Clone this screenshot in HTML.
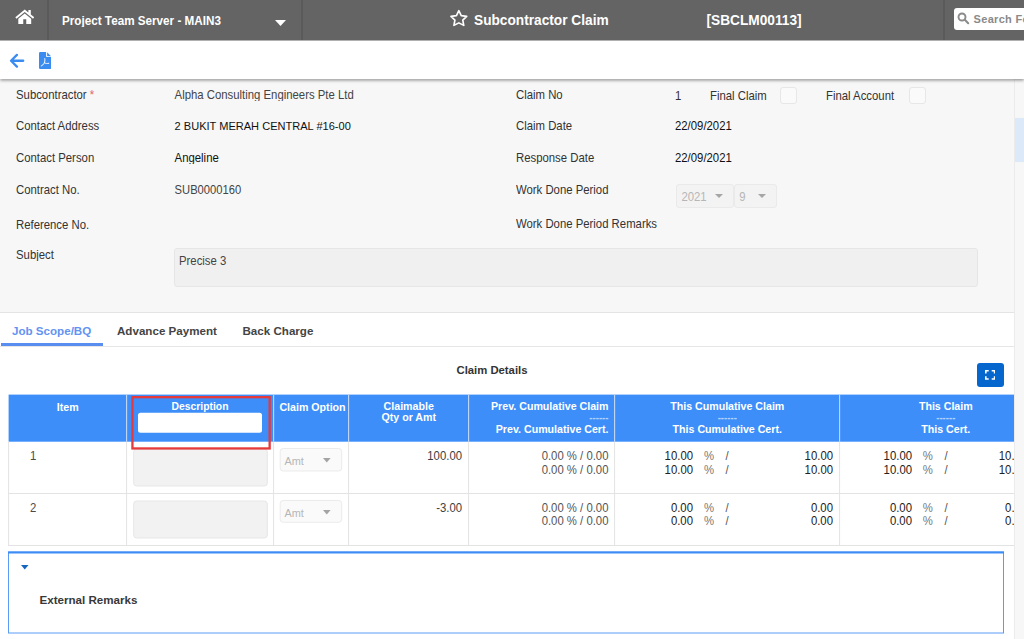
<!DOCTYPE html>
<html><head><meta charset="utf-8">
<style>
*{box-sizing:border-box;margin:0;padding:0}
html,body{width:1024px;height:639px;overflow:hidden;background:#fff;font-family:"Liberation Sans",sans-serif;font-size:12px;color:#333}
.abs{position:absolute}
#hdr{position:absolute;left:0;top:0;width:1024px;height:40px;background:#646464;z-index:4;border-bottom:1px solid #b0b0b0;box-sizing:content-box}
.vdiv{position:absolute;top:0;width:2px;height:40px;background:#5a5a5a}
.hb{position:absolute;color:#fff;font-weight:bold;white-space:nowrap}
#tool{position:absolute;left:0;top:41px;width:1024px;height:38px;background:#fff;box-shadow:0 1.5px 3px rgba(0,0,0,.4);z-index:3}
#form{position:absolute;left:0;top:80px;width:1014px;height:233px;background:#f7f7f7;border-bottom:1px solid #e4e4e4}
.lbl{margin-top:.2px;position:absolute;white-space:nowrap;font-size:11.35px;color:#333;line-height:13.084px;transform:scaleY(1.07);transform-origin:0 0}
.val{margin-top:.2px;position:absolute;white-space:nowrap;font-size:11.35px;color:#222;line-height:13.084px;transform:scaleY(1.07);transform-origin:0 0}
#side{position:absolute;left:1014px;top:79px;width:10px;height:560px;background:#f7f7f7;border-left:1px solid #ebebeb}
#side i{position:absolute;left:0;top:39.2px;width:10px;height:43.4px;background:#dce9f8}
.tab{position:absolute;top:323.500px;font-size:11.600px;line-height:14px;font-weight:bold;color:#444;white-space:nowrap}
.sel{background:#f3f3f3;border:1px solid #eaeaea;border-radius:3px}
.sel span{position:absolute;top:4.500px;font-size:11.35px;line-height:13.084px;transform:scaleY(1.07);transform-origin:0 0;color:#b6b6b6}
.sel b{position:absolute;top:9px;width:0;height:0;border-left:4px solid transparent;border-right:4px solid transparent;border-top:4px solid #a6a6a6}
#tabs{position:absolute;left:0;top:0}
#grid{position:absolute;left:0;top:0;width:1014px;height:639px;overflow:hidden}
.th{position:absolute;color:#fff;font-weight:bold;font-size:10.650px;line-height:10.981px;transform:scaleY(1.07);transform-origin:0 0;text-align:center;white-space:nowrap}
.ds{font-size:9.6px;opacity:.6;line-height:0;position:relative;top:0px}
.td{position:absolute;font-size:11.350px;line-height:13.084px;transform:scaleY(1.07);transform-origin:0 0;white-space:nowrap}
.td.r{text-align:right}
#panel{position:absolute;left:8px;top:551.500px;width:996px;height:82px;border:1px solid #5a9cf5;border-top:2px solid #3d8ef9;background:#fff}
table{border-collapse:collapse}
</style></head><body>
<div id="hdr">
 <div class="vdiv" style="left:46.8px"></div>
 <div class="vdiv" style="left:301px"></div>
 <div class="vdiv" style="left:943px"></div>
 <svg class="abs" style="left:14.6px;top:9.200px" width="19.500" height="15.100" viewBox="0 0 19.500 14.800" preserveAspectRatio="none"><path d="M9.750.5.300 8.100l1.200 1.400L9.750 2.900l8.250 6.600 1.200-1.400-3.400-2.750V1h-2.400v2.400z" fill="#fff"/><path d="M9.750 4.300 3.300 9.500v5.100h4.950v-4.500h3v4.500h4.950V9.500z" fill="#fff"/></svg>
 <div class="hb" style="left:62px;top:13px;font-size:11.7px;line-height:13.084px;transform:scaleY(1.07);transform-origin:0 0">Project Team Server - MAIN3</div>
 <svg class="abs" style="left:275px;top:20px" width="11" height="6" viewBox="0 0 11 6"><path d="M0 0h11L5.5 6z" fill="#fff"/></svg>
 <svg class="abs" style="left:449.100px;top:8.700px" width="19.700" height="18.100" viewBox="0 0 18 17" preserveAspectRatio="none"><path d="M9 1.6l2.2 4.6 5 .7-3.6 3.5.9 5L9 13l-4.5 2.4.9-5L1.8 6.9l5-.7z" fill="none" stroke="#fff" stroke-width="1.5" stroke-linejoin="round"/></svg>
 <div class="hb" style="left:474px;top:12.5px;font-size:13.7px;line-height:14.953px;transform:scaleY(1.07);transform-origin:0 0">Subcontractor Claim</div>
 <div class="hb" style="left:706.5px;top:12.5px;font-size:13.7px;line-height:14.953px;transform:scaleY(1.07);transform-origin:0 0">[SBCLM00113]</div>
 <div class="abs" style="left:954px;top:8px;width:80px;height:22px;background:#fff;border-radius:3px"></div>
 <svg class="abs" style="left:956.8px;top:12px" width="13" height="13" viewBox="0 0 13 13"><circle cx="5" cy="5" r="3.5" fill="none" stroke="#8a8a8a" stroke-width="1.900"/><path d="M7.800 7.800l3.400 3.400" stroke="#8a8a8a" stroke-width="2" stroke-linecap="round"/></svg>
 <div class="abs" style="left:973.6px;top:12px;font-size:11px;line-height:13.084px;transform:scaleY(1.07);transform-origin:0 0;font-weight:bold;color:#8a8a8a;white-space:nowrap;letter-spacing:.3px">Search For</div>
</div>
<div id="tool">
 <svg class="abs" style="left:9px;top:11.9px" width="15.500" height="15.500" viewBox="0 0 15.500 15.500"><path d="M14.200 7.750H2.400M7.900 1.900 2.050 7.750 7.900 13.600" fill="none" stroke="#3b8cf0" stroke-width="2.300" stroke-linecap="round" stroke-linejoin="round"/></svg>
 <svg class="abs" style="left:39px;top:10.700px" width="12.300" height="17" viewBox="0 0 12.300 17"><path d="M1.300 0H7.100V3.900Q7.100 5.100 8.300 5.100H12.300V15.700Q12.300 17 11 17H1.300Q0 17 0 15.700V1.300Q0 0 1.300 0Z" fill="#3b8cf0"/><path d="M8.100.3 12 4.200H8.800Q8.100 4.200 8.100 3.500Z" fill="#3b8cf0"/><path d="M5.800 6.600C6.100 8.500 5.700 10 5.200 11.100 4.500 12.500 3.400 13.600 2.300 14M5.300 10.700C6.600 11.600 8.200 11.700 9.800 11.300" fill="none" stroke="#fff" stroke-width=".95" stroke-linecap="round"/></svg>
</div>
<div id="form">
 <div class="lbl" style="left:16px;top:8px">Subcontractor <span style="color:#e8605c">*</span></div>
 <div class="lbl" style="left:16px;top:39px">Contact Address</div>
 <div class="lbl" style="left:16px;top:71px">Contact Person</div>
 <div class="lbl" style="left:16px;top:103px">Contract No.</div>
 <div class="lbl" style="left:16px;top:138px">Reference No.</div>
 <div class="lbl" style="left:16px;top:168px">Subject</div>
 <div class="val" style="left:174.600px;top:8px;color:#444">Alpha Consulting Engineers Pte Ltd</div>
 <div class="val" style="left:174.600px;top:39px;color:#111;font-size:11.05px">2 BUKIT MERAH CENTRAL #16-00</div>
 <div class="val" style="left:174.600px;top:71px;color:#111">Angeline</div>
 <div class="val" style="left:174.600px;top:103px;color:#444;font-size:11.200px">SUB0000160</div>
 <div class="abs" style="left:174px;top:168px;width:804px;height:39px;background:#f0f0f0;border:1px solid #e6e6e6;border-radius:3px"></div>
 <div class="val" style="left:179px;top:174px;color:#444">Precise 3</div>
 <div class="lbl" style="left:516px;top:8px">Claim No</div>
 <div class="lbl" style="left:516px;top:39px">Claim Date</div>
 <div class="lbl" style="left:516px;top:71px">Response Date</div>
 <div class="lbl" style="left:516px;top:103px">Work Done Period</div>
 <div class="lbl" style="left:516px;top:137px">Work Done Period Remarks</div>
 <div class="val" style="left:675px;top:9px;color:#333">1</div>
 <div class="val" style="left:710px;top:9px;color:#333">Final Claim</div>
 <div class="abs" style="left:780px;top:7px;width:17px;height:17px;background:#fafafa;border:1px solid #e7e7e7;border-radius:3px"></div>
 <div class="val" style="left:826px;top:9px;color:#333">Final Account</div>
 <div class="abs" style="left:909px;top:7px;width:17px;height:17px;background:#fafafa;border:1px solid #e7e7e7;border-radius:3px"></div>
 <div class="val" style="left:675px;top:39px;color:#111">22/09/2021</div>
 <div class="val" style="left:675px;top:71px;color:#111">22/09/2021</div>
 <div class="abs sel" style="left:676.400px;top:104.300px;width:57.500px;height:23.500px"><span style="left:4px">2021</span><b style="left:37.500px"></b></div>
 <div class="abs sel" style="left:734.300px;top:104.300px;width:43px;height:23.500px"><span style="left:4px">9</span><b style="left:23px"></b></div>
</div>
<div id="tabs">
 <div class="tab" style="left:12px;color:#6393f2">Job Scope/BQ</div>
 <div class="tab" style="left:117px">Advance Payment</div>
 <div class="tab" style="left:242.5px">Back Charge</div>
 <div class="abs" style="left:0;top:346px;width:1014px;height:1px;background:#e6e6e6"></div>
 <div class="abs" style="left:1px;top:343px;width:102px;height:3px;background:#598def"></div>
</div>
<div class="abs" style="left:0;top:363px;width:984px;text-align:center;font-size:11.3px;line-height:14px;font-weight:bold;color:#333">Claim Details</div>
<div class="abs" style="left:977px;top:363px;width:27px;height:24px;background:#0566cd;border-radius:3px"></div>
<svg class="abs" style="left:984.8px;top:370px" width="10.4" height="9.8" viewBox="0 0 10.4 9.8"><path d="M.8 3.500V.8H3.700M6.700.8H9.600V3.500M9.600 6.300V9H6.700M3.700 9H.8V6.300" fill="none" stroke="#fff" stroke-width="1.600"/></svg>
<div id="grid"><svg class="abs" style="left:0;top:0" width="1014" height="639" viewBox="0 0 1014 639"><rect x="8.60" y="394.60" width="1005.40" height="47.10" fill="#3d8ef9"/><path d="M126.60 394.60L126.60 441.70" stroke="#c4daf8" stroke-width="1.1"/><path d="M273.60 394.60L273.60 441.70" stroke="#c4daf8" stroke-width="1.1"/><path d="M348.60 394.60L348.60 441.70" stroke="#c4daf8" stroke-width="1.1"/><path d="M468.60 394.60L468.60 441.70" stroke="#c4daf8" stroke-width="1.1"/><path d="M614.60 394.60L614.60 441.70" stroke="#c4daf8" stroke-width="1.1"/><path d="M839.60 394.60L839.60 441.70" stroke="#c4daf8" stroke-width="1.1"/><path d="M8.60 441.70L8.60 546.00" stroke="#e3e3e3" stroke-width="1"/><path d="M126.60 441.70L126.60 546.00" stroke="#e3e3e3" stroke-width="1"/><path d="M273.60 441.70L273.60 546.00" stroke="#e3e3e3" stroke-width="1"/><path d="M348.60 441.70L348.60 546.00" stroke="#e3e3e3" stroke-width="1"/><path d="M468.60 441.70L468.60 546.00" stroke="#e3e3e3" stroke-width="1"/><path d="M614.60 441.70L614.60 546.00" stroke="#e3e3e3" stroke-width="1"/><path d="M839.60 441.70L839.60 546.00" stroke="#e3e3e3" stroke-width="1"/><path d="M8.10 493.50L1014.00 493.50" stroke="#e3e3e3" stroke-width="1"/><path d="M8.10 545.50L1014.00 545.50" stroke="#e3e3e3" stroke-width="1"/><rect x="138.00" y="412.70" width="124.00" height="20.00" fill="#fff" rx="2.5"/><rect x="133.70" y="449.00" width="133.60" height="37.00" fill="#f2f2f2" stroke="#e7e7e7" stroke-width="1" rx="3"/><rect x="280.20" y="448.50" width="61.50" height="22.50" fill="#fafafa" stroke="#ebebeb" stroke-width="1" rx="3"/><path d="M323.00 458.00h7.6l-3.8 4.4z" fill="#a4a4a4"/><rect x="133.70" y="501.00" width="133.60" height="37.00" fill="#f2f2f2" stroke="#e7e7e7" stroke-width="1" rx="3"/><rect x="280.20" y="500.50" width="61.50" height="21.80" fill="#fafafa" stroke="#ebebeb" stroke-width="1" rx="3"/><path d="M323.00 510.00h7.6l-3.8 4.4z" fill="#a4a4a4"/><rect x="132.45" y="397.15" width="137.20" height="51.30" fill="none" stroke="#e5393b" stroke-width="2.3"/></svg>
<div class="th" style="left:9.00px;width:117.50px;top:401.00px;">Item</div>
<div class="th" style="left:127.00px;width:146.00px;top:399.70px;font-size:10.35px">Description</div>
<div class="th" style="left:274.70px;width:75.60px;top:401.00px;">Claim Option</div>
<div class="th" style="left:349.00px;width:119.50px;top:399.50px;">Claimable<br>Qty or Amt</div>
<div class="th" style="left:469.00px;width:139.50px;top:399.50px;text-align:right">Prev. Cumulative Claim<br><span class="ds">------</span><br>Prev. Cumulative Cert.</div>
<div class="th" style="left:615.00px;width:224.50px;top:399.50px;">This Cumulative Claim<br><span class="ds">------</span><br>This Cumulative Cert.</div>
<div class="th" style="left:840.00px;width:211.60px;top:399.50px;">This Claim<br><span class="ds">------</span><br>This Cert.</div>
<div class="td" style="top:448.60px;color:#4a4a4a;left:30.00px">1</div>
<div class="td" style="top:453.60px;color:#b6b6b6;font-size:10.9px;left:284.50px">Amt</div>
<div class="td" style="top:449.10px;color:#404040;right:552.00px;text-align:right">100.00</div>
<div class="td" style="top:449.10px;color:#555;right:405.50px;text-align:right">0.00 % / 0.00</div>
<div class="td" style="top:449.10px;color:#222;right:321.00px;text-align:right">10.00</div>
<div class="td" style="top:449.10px;color:#777;left:704.00px">%</div>
<div class="td" style="top:449.10px;color:#555;left:725.50px">/</div>
<div class="td" style="top:449.10px;color:#222;right:181.00px;text-align:right">10.00</div>
<div class="td" style="top:449.10px;color:#222;right:102.00px;text-align:right">10.00</div>
<div class="td" style="top:449.10px;color:#777;left:922.80px">%</div>
<div class="td" style="top:449.10px;color:#555;left:944.60px">/</div>
<div class="td" style="top:449.10px;color:#222;right:-13.20px;text-align:right">10.00</div>
<div class="td" style="top:462.50px;color:#555;right:405.50px;text-align:right">0.00 % / 0.00</div>
<div class="td" style="top:462.50px;color:#222;right:321.00px;text-align:right">10.00</div>
<div class="td" style="top:462.50px;color:#777;left:704.00px">%</div>
<div class="td" style="top:462.50px;color:#555;left:725.50px">/</div>
<div class="td" style="top:462.50px;color:#222;right:181.00px;text-align:right">10.00</div>
<div class="td" style="top:462.50px;color:#222;right:102.00px;text-align:right">10.00</div>
<div class="td" style="top:462.50px;color:#777;left:922.80px">%</div>
<div class="td" style="top:462.50px;color:#555;left:944.60px">/</div>
<div class="td" style="top:462.50px;color:#222;right:-13.20px;text-align:right">10.00</div>
<div class="td" style="top:501.10px;color:#4a4a4a;left:30.00px">2</div>
<div class="td" style="top:505.60px;color:#b6b6b6;font-size:10.9px;left:284.50px">Amt</div>
<div class="td" style="top:500.60px;color:#404040;right:552.00px;text-align:right">-3.00</div>
<div class="td" style="top:500.60px;color:#555;right:405.50px;text-align:right">0.00 % / 0.00</div>
<div class="td" style="top:500.60px;color:#222;right:321.00px;text-align:right">0.00</div>
<div class="td" style="top:500.60px;color:#777;left:704.00px">%</div>
<div class="td" style="top:500.60px;color:#555;left:725.50px">/</div>
<div class="td" style="top:500.60px;color:#222;right:181.00px;text-align:right">0.00</div>
<div class="td" style="top:500.60px;color:#222;right:102.00px;text-align:right">0.00</div>
<div class="td" style="top:500.60px;color:#777;left:922.80px">%</div>
<div class="td" style="top:500.60px;color:#555;left:944.60px">/</div>
<div class="td" style="top:500.60px;color:#222;right:-13.20px;text-align:right">0.00</div>
<div class="td" style="top:514.00px;color:#555;right:405.50px;text-align:right">0.00 % / 0.00</div>
<div class="td" style="top:514.00px;color:#222;right:321.00px;text-align:right">0.00</div>
<div class="td" style="top:514.00px;color:#777;left:704.00px">%</div>
<div class="td" style="top:514.00px;color:#555;left:725.50px">/</div>
<div class="td" style="top:514.00px;color:#222;right:181.00px;text-align:right">0.00</div>
<div class="td" style="top:514.00px;color:#222;right:102.00px;text-align:right">0.00</div>
<div class="td" style="top:514.00px;color:#777;left:922.80px">%</div>
<div class="td" style="top:514.00px;color:#555;left:944.60px">/</div>
<div class="td" style="top:514.00px;color:#222;right:-13.20px;text-align:right">0.00</div>
</div>
<svg class="abs" style="left:0;top:540px" width="1014" height="99" viewBox="0 540 1014 99"><rect x="8.500" y="552" width="995" height="81" fill="#fff" stroke="#5a9cf5" stroke-width="1"/><rect x="8" y="551.500" width="996" height="2" fill="#3d8cf6"/></svg>
<svg class="abs" style="left:21px;top:565px" width="7.500" height="4.500" viewBox="0 0 7.500 4.500"><path d="M0 0h7.500L3.750 4.500z" fill="#1565c0"/></svg>
<div class="abs" style="left:39.500px;top:593px;font-size:11.600px;line-height:14px;font-weight:bold;color:#383838;white-space:nowrap">External Remarks</div>
<div id="side"><i></i></div>
</body></html>
